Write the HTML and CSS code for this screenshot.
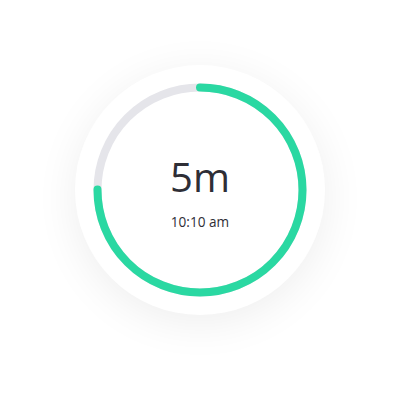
FILE: index.html
```html
<!DOCTYPE html>
<html>
<head>
<meta charset="utf-8">
<link rel="stylesheet" href="styles.css">
</head>
<body>
<div class="page">
  <div class="dial">
    <svg class="ring" width="250" height="250" viewBox="0 0 250 250">
      <circle class="track" cx="125" cy="125" r="102.5"/>
      <circle class="progress" cx="125" cy="125" r="102.5" stroke-dasharray="483 644" transform="rotate(-90 125 125)"/>
    </svg>
    <div class="label">
      <div class="value">5m</div>
      <div class="time">10:10 am</div>
    </div>
  </div>
</div>
</body>
</html>
```
FILE: styles.css
```css
html, body {
  margin: 0;
  padding: 0;
  background: #ffffff;
}
.page {
  width: 400px;
  height: 400px;
  display: flex;
  justify-content: center;
  padding-top: 65px;
  box-sizing: border-box;
}
.dial {
  width: 250px;
  height: 250px;
  border-radius: 50%;
  background: #ffffff;
  box-shadow: 0 8px 44px rgba(0, 0, 0, 0.07);
  display: grid;
}
.ring, .label {
  grid-area: 1 / 1;
}
.track {
  fill: none;
  stroke: #e5e5ea;
  stroke-width: 8;
}
.progress {
  fill: none;
  stroke: #2ad8a2;
  stroke-width: 8;
  stroke-linecap: round;
}
.label {
  align-self: center;
  justify-self: center;
  margin-top: 7px;
  display: flex;
  flex-direction: column;
  align-items: center;
  font-family: "Open Sans", sans-serif;
  color: #2e2e36;
}
.value {
  font-size: 40px;
  line-height: 40px;
  height: 40px;
  margin-bottom: 17px;
}
.time {
  font-size: 13.6px;
  line-height: 16px;
}
```
